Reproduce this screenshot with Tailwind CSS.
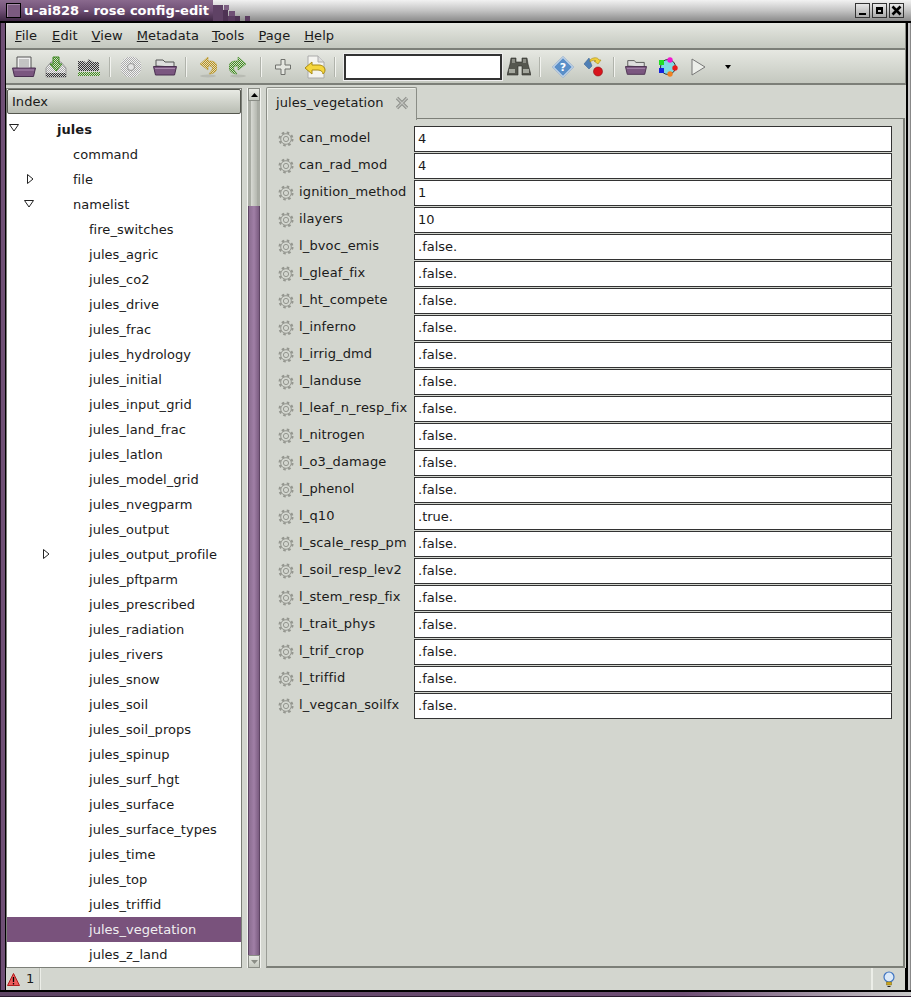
<!DOCTYPE html>
<html><head><meta charset="utf-8">
<script src="https://cdn.jsdelivr.net/npm/@tailwindcss/browser@4"></script>
</head>
<body class="m-0 overflow-hidden bg-white">
<svg width="0" height="0" class="absolute"><defs>
<pattern id="dk" width="2" height="2" patternUnits="userSpaceOnUse"><rect width="1" height="1" fill="#333"/><rect x="1" y="1" width="1" height="1" fill="#333"/><rect x="1" width="1" height="1" fill="#ccc"/><rect y="1" width="1" height="1" fill="#ccc"/></pattern>
<pattern id="gr" width="2" height="2" patternUnits="userSpaceOnUse"><rect width="1" height="1" fill="#3f8a22"/><rect x="1" y="1" width="1" height="1" fill="#3f8a22"/><rect x="1" width="1" height="1" fill="#d4dcc8"/><rect y="1" width="1" height="1" fill="#d4dcc8"/></pattern>
<pattern id="ye" width="2" height="2" patternUnits="userSpaceOnUse"><rect width="1" height="1" fill="#b8901a"/><rect x="1" y="1" width="1" height="1" fill="#b8901a"/><rect x="1" width="1" height="1" fill="#e0dcc0"/><rect y="1" width="1" height="1" fill="#e0dcc0"/></pattern>
<pattern id="lt" width="2" height="2" patternUnits="userSpaceOnUse"><rect width="1" height="1" fill="#aaa"/><rect x="1" y="1" width="1" height="1" fill="#aaa"/><rect x="1" width="1" height="1" fill="#f2f2f2"/><rect y="1" width="1" height="1" fill="#f2f2f2"/></pattern>
<symbol id="gear" viewBox="0 0 16 16"><g fill="none" stroke="#94968f"><circle cx="8" cy="8" r="6.500" stroke-width="2" stroke-dasharray="2.550 2.550"/><circle cx="8" cy="8" r="5.300" stroke-width="1"/><circle cx="8" cy="8" r="2.600" stroke-width="1"/></g></symbol>
<symbol id="tray" viewBox="0 0 24 10"><path d="M0.5 1h23l-2 8.500h-19z" fill="#7b5780" stroke="#4a3050"/><path d="M2 3h20" stroke="#a98aae"/></symbol>
</defs></svg>

<div class="w-[911px] h-[997px] flex flex-col relative font-['DejaVu_Sans',sans-serif] text-[13px] text-[#1a1a1a] bg-[#d3d6cf] overflow-hidden">
  <!-- Title bar -->
  <div class="h-[23px] shrink-0 flex items-center relative border-b-2 border-black bg-gradient-to-b from-[#f2f2f2] via-[#c4c4c4] to-[#8c8c8c]">
    <div class="absolute left-0 top-0 h-[21px] w-[213px] bg-gradient-to-b from-[#8a6a8e] via-[#6f4f75] to-[#3f2844]"></div>
    <div class="absolute left-[213px] top-[5px] w-[10px] h-[16px] bg-[#5f4265]"></div>
    <div class="absolute left-[223px] top-[10px] w-[5px] h-[11px] bg-[#4e3354]"></div>
    <div class="absolute left-[224px] top-[5px] w-[5px] h-[5px] bg-[#7d6082]"></div>
    <div class="absolute left-[229px] top-[11px] w-[6px] h-[5px] bg-[#6f4f75]"></div>
    <div class="absolute left-[228px] top-[16px] w-[7px] h-[5px] bg-[#5a3c60]"></div>
    <div class="absolute left-[235px] top-[16px] w-[5px] h-[5px] bg-[#4e3354]"></div>
    <div class="absolute left-[245px] top-[16px] w-[5px] h-[5px] bg-[#5a3c60]"></div>
    <div class="relative ml-[6px] w-[15px] h-[15px] border border-black bg-[#7b5a80] shadow-[inset_1px_1px_0_#a58aa8]"></div>
    <span class="relative ml-[3px] text-white font-bold text-[13px] whitespace-nowrap">u-ai828 - rose config-edit</span>
    <div class="ml-auto mr-[7px] relative flex gap-[2px]">
      <div class="w-[15px] h-[15px] border border-[#333] bg-gradient-to-b from-[#e8e8e8] to-[#aaa] flex items-end justify-center pb-[2px]"><div class="w-[7px] h-[2px] bg-black"></div></div>
      <div class="w-[15px] h-[15px] border border-[#333] bg-gradient-to-b from-[#e8e8e8] to-[#aaa] flex items-center justify-center"><div class="w-[7px] h-[7px] border-2 border-black border-t-[3px]"></div></div>
      <div class="w-[15px] h-[15px] border border-[#333] bg-gradient-to-b from-[#e8e8e8] to-[#aaa] flex items-center justify-center"><svg width="11" height="11" viewBox="0 0 11 11"><path d="M1.500 1.500l8 8M9.500 1.500l-8 8" stroke="#000" stroke-width="2.600"/></svg></div>
    </div>
  </div>

  <div class="flex-1 flex min-h-0">
    <!-- left frame -->
    <div class="w-[6px] shrink-0 bg-[#6f4f75] border-l border-[#2a1a2e] border-r border-r-black"></div>
    <div class="flex-1 min-w-0 flex flex-col">
      <!-- Menu -->
      <div class="h-[27px] shrink-0 flex items-center pl-[2px] pt-px border-b-2 border-[#7c7f78] border-r border-r-[#8a8d86] bg-gradient-to-b from-[#e6e8e2] to-[#c4c8bf] tracking-[0.08px]">
        <div class="pl-[7px] pr-[8px]"><span class="underline">F</span>ile</div>
        <div class="px-[7px]"><span class="underline">E</span>dit</div>
        <div class="px-[7px]"><span class="underline">V</span>iew</div>
        <div class="pl-[7px] pr-[6px]"><span class="underline">M</span>etadata</div>
        <div class="px-[7px]"><span class="underline">T</span>ools</div>
        <div class="px-[7px]"><span class="underline">P</span>age</div>
        <div class="px-[7px]"><span class="underline">H</span>elp</div>
      </div>
      <!-- Toolbar -->
      <div class="h-[35px] shrink-0 flex items-center border-b-2 border-[#7c7f78] border-r border-r-[#8a8d86] bg-gradient-to-b from-[#e6e8e2] to-[#c4c8bf]">
        <svg class="ml-[6px]" width="24" height="22" viewBox="0 0 24 22"><path d="M5 1h14v13H5z" fill="#eee" stroke="#555"/><path d="M7 4h10M7 6h10M7 8h10M7 10h10" stroke="#999"/><use href="#tray" y="11" width="24" height="10"/></svg>
        <svg class="ml-[8px]" width="24" height="24" viewBox="0 0 24 24"><path d="M2 13l5-6h10l5 6v9H2z" fill="url(#lt)" stroke="#999"/><path d="M2 18h20v4H2z" fill="url(#dk)"/><path d="M9 2h6v7h3l-6 7-6-7h3z" fill="url(#gr)" stroke="#3f8a22"/></svg>
        <svg class="ml-[9px]" width="24" height="22" viewBox="0 0 24 22"><path d="M1 5h6l2 2 3-4 4 3h6v9H1z" fill="url(#dk)"/><path d="M1 16h22v4H1z" fill="url(#gr)"/></svg>
        <div class="ml-[9px] w-px h-[20px] bg-[#f2f3ef] shadow-[-1px_0_0_#b0b3ab]"></div>
        <svg class="ml-[9px]" width="22" height="22" viewBox="0 0 22 22"><circle cx="11" cy="11" r="10.500" fill="url(#lt)"/><circle cx="11" cy="11" r="3.500" fill="#e4e4e4" stroke="#999"/></svg>
        <svg class="ml-[11px]" width="24" height="20" viewBox="0 0 24 20"><path d="M3 9V3h7l2 2h9v5z" fill="#ddd" stroke="#555"/><use href="#tray" y="8" width="24" height="11"/></svg>
        <div class="ml-[9px] w-px h-[20px] bg-[#f2f3ef] shadow-[-1px_0_0_#b0b3ab]"></div>
        <svg class="ml-[12px]" width="18" height="22" viewBox="0 0 18 22"><ellipse cx="9" cy="20" rx="8" ry="1.500" fill="#b8bbb3"/><path d="M9 1L1 8l8 6v-4h2c2 0 3 2 2 4l-3 4c5 0 8-3 8-7 0-4-3-6-7-6H9z" fill="url(#ye)" stroke="#b8901a" stroke-width=".5"/></svg>
        <svg class="ml-[12px]" width="18" height="22" viewBox="0 0 18 22"><ellipse cx="9" cy="20" rx="8" ry="1.500" fill="#b8bbb3"/><path d="M9 1l8 7-8 6v-4H7c-2 0-3 2-2 4l3 4c-5 0-8-3-8-7 0-4 3-6 7-6h2z" fill="url(#gr)" stroke="#3f8a22" stroke-width=".5"/></svg>
        <div class="ml-[14px] w-px h-[20px] bg-[#f2f3ef] shadow-[-1px_0_0_#b0b3ab]"></div>
        <svg class="ml-[13px]" width="16" height="16" viewBox="0 0 16 16"><path d="M6 .5h4v5.500h5.500v4H10v5.500H6V10H.5V6H6z" fill="#e4e6e0" stroke="#6f716c"/></svg>
        <svg class="ml-[13px]" width="22" height="24" viewBox="0 0 22 24"><path d="M4 1h10l6 6v16H4z" fill="#f4f4f0" stroke="#aaa"/><path d="M14 1v6h6" fill="#ddd" stroke="#aaa"/><path d="M1 13l7-6v3h7c3 0 6 2 6 5 0 2-1 3-2 4 0-2-2-4-5-4H8v4z" fill="#f5d63d" stroke="#a88a12"/></svg>
        <div class="ml-[9px] w-px h-[20px] bg-[#f2f3ef] shadow-[-1px_0_0_#b0b3ab]"></div>
        <div class="ml-[8px] w-[158px] h-[26px] bg-white border-2 border-[#333] shadow-[0_0_0_1px_#eee]"></div>
        <svg class="ml-[5px]" width="24" height="20" viewBox="0 0 24 20"><path d="M4 1h5v4h6V1h5l1 6 3 11h-9V9h-4v9H0L3 7z" fill="#55574f" stroke="#2e2e2a" stroke-width=".6"/><path d="M2 12h6v4H2zM16 12h6v4h-6z" fill="#a5a89f"/><path d="M5 2h3v4H5zM16 2h3v4h-3z" fill="#8b8d85"/></svg>
        <div class="ml-[9px] w-px h-[20px] bg-[#f2f3ef] shadow-[-1px_0_0_#b0b3ab]"></div>
        <svg class="ml-[11px]" width="22" height="22" viewBox="0 0 22 22"><path d="M11 1l10 10-10 10L1 11z" fill="#5b8fc8" stroke="#fff" stroke-width="1.400"/><path d="M11 .5L21.500 11 11 21.500.5 11z" fill="none" stroke="#3d6ea6" stroke-width=".7"/><text x="11" y="15" text-anchor="middle" font-size="11" font-weight="700" fill="#fff" font-family="DejaVu Sans">?</text></svg>
        <svg class="ml-[9px]" width="22" height="22" viewBox="0 0 22 22"><path d="M1 8l5-6 3 8-3 3z" fill="#4f7fb5" stroke="#2f5a8d" stroke-width=".5"/><path d="M7 4c3-3 8-3 9 0l2 0-3 4-4-3 2 0c-1-1-4-1-6 1z" fill="#f0cf3c" stroke="#a88a12" stroke-width=".6"/><circle cx="15" cy="15.500" r="4.500" fill="#d8141c" stroke="#8c0d12" stroke-width=".6"/></svg>
        <div class="ml-[9px] w-px h-[20px] bg-[#f2f3ef] shadow-[-1px_0_0_#b0b3ab]"></div>
        <svg class="ml-[10px]" width="22" height="20" viewBox="0 0 24 20"><path d="M3 9V3h7l2 2h9v5z" fill="#ddd" stroke="#555"/><use href="#tray" y="8" width="24" height="11"/></svg>
        <svg class="ml-[11px]" width="20" height="20" viewBox="0 0 20 20"><circle cx="10" cy="10" r="7.500" fill="#7fdbe4" stroke="#333"/><rect x="1" y="3" width="5" height="5" fill="#22dd22"/><rect x="1" y="11" width="5" height="5" fill="#1522e0"/><circle cx="12" cy="3" r="2.700" fill="#f018d0"/><circle cx="17" cy="11" r="2.700" fill="#e81a1a"/><circle cx="12" cy="17" r="2.700" fill="#f08020"/></svg>
        <svg class="ml-[13px]" width="16" height="18" viewBox="0 0 16 18"><path d="M1 1l13 8-13 8z" fill="#eceee9" stroke="#777"/></svg>
        <svg class="ml-[18px]" width="6" height="4" viewBox="0 0 6 4"><path d="M0 0h6L3 4z" fill="#000"/></svg>
      </div>
      <!-- Main -->
      <div class="flex-1 min-h-0 flex pt-[2px]">
        <!-- Left column -->
        <div class="w-[236px] shrink-0 flex flex-col border border-[#7c7f78] bg-white mt-px overflow-hidden h-[880px] tracking-[0.04px]">
          <div class="h-[25px] shrink-0 flex items-center pl-[4px] border border-[#55574f] rounded-[2px] bg-gradient-to-b from-[#e8eae4] to-[#b9bdb3]">Index</div>
          <div id="tree" class="pt-[3px] flex flex-col">
            <div class="h-[25px] flex items-center relative pl-[50px] font-bold"><svg class="absolute left-[2px] top-[7px]" width="10" height="8" viewBox="0 0 10 8"><path d="M.5.5h9L5 7z" fill="#fff" stroke="#222"/></svg>jules</div>
            <div class="h-[25px] flex items-center pl-[66px]">command</div>
            <div class="h-[25px] flex items-center relative pl-[66px]"><svg class="absolute left-[19px] top-[7px]" width="8" height="10" viewBox="0 0 8 10"><path d="M1.500.5v9L7 5z" fill="#fff" stroke="#222"/></svg>file</div>
            <div class="h-[25px] flex items-center relative pl-[66px]"><svg class="absolute left-[17px] top-[8px]" width="10" height="8" viewBox="0 0 10 8"><path d="M.5.5h9L5 7z" fill="#fff" stroke="#222"/></svg>namelist</div>
            <div class="h-[25px] flex items-center pl-[82px]">fire_switches</div>
            <div class="h-[25px] flex items-center pl-[82px]">jules_agric</div>
            <div class="h-[25px] flex items-center pl-[82px]">jules_co2</div>
            <div class="h-[25px] flex items-center pl-[82px]">jules_drive</div>
            <div class="h-[25px] flex items-center pl-[82px]">jules_frac</div>
            <div class="h-[25px] flex items-center pl-[82px]">jules_hydrology</div>
            <div class="h-[25px] flex items-center pl-[82px]">jules_initial</div>
            <div class="h-[25px] flex items-center pl-[82px]">jules_input_grid</div>
            <div class="h-[25px] flex items-center pl-[82px]">jules_land_frac</div>
            <div class="h-[25px] flex items-center pl-[82px]">jules_latlon</div>
            <div class="h-[25px] flex items-center pl-[82px]">jules_model_grid</div>
            <div class="h-[25px] flex items-center pl-[82px]">jules_nvegparm</div>
            <div class="h-[25px] flex items-center pl-[82px]">jules_output</div>
            <div class="h-[25px] flex items-center relative pl-[82px]"><svg class="absolute left-[35px] top-[7px]" width="8" height="10" viewBox="0 0 8 10"><path d="M1.500.5v9L7 5z" fill="#fff" stroke="#222"/></svg>jules_output_profile</div>
            <div class="h-[25px] flex items-center pl-[82px]">jules_pftparm</div>
            <div class="h-[25px] flex items-center pl-[82px]">jules_prescribed</div>
            <div class="h-[25px] flex items-center pl-[82px]">jules_radiation</div>
            <div class="h-[25px] flex items-center pl-[82px]">jules_rivers</div>
            <div class="h-[25px] flex items-center pl-[82px]">jules_snow</div>
            <div class="h-[25px] flex items-center pl-[82px]">jules_soil</div>
            <div class="h-[25px] flex items-center pl-[82px]">jules_soil_props</div>
            <div class="h-[25px] flex items-center pl-[82px]">jules_spinup</div>
            <div class="h-[25px] flex items-center pl-[82px]">jules_surf_hgt</div>
            <div class="h-[25px] flex items-center pl-[82px]">jules_surface</div>
            <div class="h-[25px] flex items-center pl-[82px]">jules_surface_types</div>
            <div class="h-[25px] flex items-center pl-[82px]">jules_time</div>
            <div class="h-[25px] flex items-center pl-[82px]">jules_top</div>
            <div class="h-[25px] flex items-center pl-[82px]">jules_triffid</div>
            <div class="h-[25px] flex items-center pl-[82px] bg-[#79527c] text-[#f0eef0]">jules_vegetation</div>
            <div class="h-[25px] flex items-center pl-[82px]">jules_z_land</div>
          </div>
        </div>
        <!-- Scrollbar -->
        <div class="w-[14px] shrink-0 ml-[5px] mt-px h-[880px] flex flex-col bg-[#bfc2ba] border-x border-[#f2f3ef]">
          <div class="h-[13px] shrink-0 flex items-center justify-center bg-gradient-to-b from-[#e8eae4] to-[#c4c8bf] border border-[#8a8d86]"><svg width="7" height="4" viewBox="0 0 7 4"><path d="M3.500 0L7 4H0z" fill="#000"/></svg></div>
          <div class="h-[105px] shrink-0 flex justify-center bg-[#a9aca4]"><div class="w-[6px] bg-gradient-to-r from-[#d8dad4] to-[#b5b8b0]"></div></div>
          <div class="flex-1 bg-gradient-to-r from-[#8a6d90] via-[#a07fa6] to-[#7a5c80] border-x border-[#5e4464]"></div>
          <div class="h-[13px] shrink-0 flex items-center justify-center bg-gradient-to-b from-[#e8eae4] to-[#c4c8bf] border border-[#8a8d86]"><svg width="7" height="4" viewBox="0 0 7 4"><path d="M3.500 4L7 0H0z" fill="#8a8d86"/></svg></div>
        </div>
        <!-- Notebook -->
        <div class="w-[639px] ml-[5px] flex flex-col h-[881px]">
          <div class="h-[32px] shrink-0 flex">
            <div class="w-[151px] flex items-center pl-[9px] pb-[2px] border-l border-t border-r border-[#8a8d86] rounded-t-[2px] bg-[#d3d6cf] shadow-[inset_1px_1px_0_#eef0ea] relative z-10 -mb-px tracking-[0.06px]">
              <span>jules_vegetation</span>
              <svg class="ml-[11px]" width="14" height="14" viewBox="0 0 14 14"><path d="M2 2l10 10M12 2L2 12" stroke="#8e908b" stroke-width="3.200"/><path d="M2 2l10 10M12 2L2 12" stroke="#c2c4bf" stroke-width="1.200"/></svg>
            </div>
            <div class="flex-1 border-b border-[#7c7f78]"></div>
          </div>
          <div class="flex-1 border-b-2 border-l border-r-2 border-[#7c7f78] border-l-[#9a9d96] pt-[7px] pl-[11px] flex flex-col gap-[1px]">
            <div class="h-[26px] flex items-center"><svg class="shrink-0" width="16" height="16"><use href="#gear"/></svg><span class="w-[120px] pl-[5px] shrink-0 -mt-[2px] tracking-[0.14px]">can_model</span><div class="w-[478px] h-[26px] bg-white border border-[#333] flex items-center pl-[3px]">4</div></div>
            <div class="h-[26px] flex items-center"><svg class="shrink-0" width="16" height="16"><use href="#gear"/></svg><span class="w-[120px] pl-[5px] shrink-0 -mt-[2px] tracking-[0.14px]">can_rad_mod</span><div class="w-[478px] h-[26px] bg-white border border-[#333] flex items-center pl-[3px]">4</div></div>
            <div class="h-[26px] flex items-center"><svg class="shrink-0" width="16" height="16"><use href="#gear"/></svg><span class="w-[120px] pl-[5px] shrink-0 -mt-[2px] tracking-[0.14px]">ignition_method</span><div class="w-[478px] h-[26px] bg-white border border-[#333] flex items-center pl-[3px]">1</div></div>
            <div class="h-[26px] flex items-center"><svg class="shrink-0" width="16" height="16"><use href="#gear"/></svg><span class="w-[120px] pl-[5px] shrink-0 -mt-[2px] tracking-[0.14px]">ilayers</span><div class="w-[478px] h-[26px] bg-white border border-[#333] flex items-center pl-[3px]">10</div></div>
            <div class="h-[26px] flex items-center"><svg class="shrink-0" width="16" height="16"><use href="#gear"/></svg><span class="w-[120px] pl-[5px] shrink-0 -mt-[2px] tracking-[0.14px]">l_bvoc_emis</span><div class="w-[478px] h-[26px] bg-white border border-[#333] flex items-center pl-[3px]">.false.</div></div>
            <div class="h-[26px] flex items-center"><svg class="shrink-0" width="16" height="16"><use href="#gear"/></svg><span class="w-[120px] pl-[5px] shrink-0 -mt-[2px] tracking-[0.14px]">l_gleaf_fix</span><div class="w-[478px] h-[26px] bg-white border border-[#333] flex items-center pl-[3px]">.false.</div></div>
            <div class="h-[26px] flex items-center"><svg class="shrink-0" width="16" height="16"><use href="#gear"/></svg><span class="w-[120px] pl-[5px] shrink-0 -mt-[2px] tracking-[0.14px]">l_ht_compete</span><div class="w-[478px] h-[26px] bg-white border border-[#333] flex items-center pl-[3px]">.false.</div></div>
            <div class="h-[26px] flex items-center"><svg class="shrink-0" width="16" height="16"><use href="#gear"/></svg><span class="w-[120px] pl-[5px] shrink-0 -mt-[2px] tracking-[0.14px]">l_inferno</span><div class="w-[478px] h-[26px] bg-white border border-[#333] flex items-center pl-[3px]">.false.</div></div>
            <div class="h-[26px] flex items-center"><svg class="shrink-0" width="16" height="16"><use href="#gear"/></svg><span class="w-[120px] pl-[5px] shrink-0 -mt-[2px] tracking-[0.14px]">l_irrig_dmd</span><div class="w-[478px] h-[26px] bg-white border border-[#333] flex items-center pl-[3px]">.false.</div></div>
            <div class="h-[26px] flex items-center"><svg class="shrink-0" width="16" height="16"><use href="#gear"/></svg><span class="w-[120px] pl-[5px] shrink-0 -mt-[2px] tracking-[0.14px]">l_landuse</span><div class="w-[478px] h-[26px] bg-white border border-[#333] flex items-center pl-[3px]">.false.</div></div>
            <div class="h-[26px] flex items-center"><svg class="shrink-0" width="16" height="16"><use href="#gear"/></svg><span class="w-[120px] pl-[5px] shrink-0 -mt-[2px] tracking-[0.14px]">l_leaf_n_resp_fix</span><div class="w-[478px] h-[26px] bg-white border border-[#333] flex items-center pl-[3px]">.false.</div></div>
            <div class="h-[26px] flex items-center"><svg class="shrink-0" width="16" height="16"><use href="#gear"/></svg><span class="w-[120px] pl-[5px] shrink-0 -mt-[2px] tracking-[0.14px]">l_nitrogen</span><div class="w-[478px] h-[26px] bg-white border border-[#333] flex items-center pl-[3px]">.false.</div></div>
            <div class="h-[26px] flex items-center"><svg class="shrink-0" width="16" height="16"><use href="#gear"/></svg><span class="w-[120px] pl-[5px] shrink-0 -mt-[2px] tracking-[0.14px]">l_o3_damage</span><div class="w-[478px] h-[26px] bg-white border border-[#333] flex items-center pl-[3px]">.false.</div></div>
            <div class="h-[26px] flex items-center"><svg class="shrink-0" width="16" height="16"><use href="#gear"/></svg><span class="w-[120px] pl-[5px] shrink-0 -mt-[2px] tracking-[0.14px]">l_phenol</span><div class="w-[478px] h-[26px] bg-white border border-[#333] flex items-center pl-[3px]">.false.</div></div>
            <div class="h-[26px] flex items-center"><svg class="shrink-0" width="16" height="16"><use href="#gear"/></svg><span class="w-[120px] pl-[5px] shrink-0 -mt-[2px] tracking-[0.14px]">l_q10</span><div class="w-[478px] h-[26px] bg-white border border-[#333] flex items-center pl-[3px]">.true.</div></div>
            <div class="h-[26px] flex items-center"><svg class="shrink-0" width="16" height="16"><use href="#gear"/></svg><span class="w-[120px] pl-[5px] shrink-0 -mt-[2px] tracking-[0.14px]">l_scale_resp_pm</span><div class="w-[478px] h-[26px] bg-white border border-[#333] flex items-center pl-[3px]">.false.</div></div>
            <div class="h-[26px] flex items-center"><svg class="shrink-0" width="16" height="16"><use href="#gear"/></svg><span class="w-[120px] pl-[5px] shrink-0 -mt-[2px] tracking-[0.14px]">l_soil_resp_lev2</span><div class="w-[478px] h-[26px] bg-white border border-[#333] flex items-center pl-[3px]">.false.</div></div>
            <div class="h-[26px] flex items-center"><svg class="shrink-0" width="16" height="16"><use href="#gear"/></svg><span class="w-[120px] pl-[5px] shrink-0 -mt-[2px] tracking-[0.14px]">l_stem_resp_fix</span><div class="w-[478px] h-[26px] bg-white border border-[#333] flex items-center pl-[3px]">.false.</div></div>
            <div class="h-[26px] flex items-center"><svg class="shrink-0" width="16" height="16"><use href="#gear"/></svg><span class="w-[120px] pl-[5px] shrink-0 -mt-[2px] tracking-[0.14px]">l_trait_phys</span><div class="w-[478px] h-[26px] bg-white border border-[#333] flex items-center pl-[3px]">.false.</div></div>
            <div class="h-[26px] flex items-center"><svg class="shrink-0" width="16" height="16"><use href="#gear"/></svg><span class="w-[120px] pl-[5px] shrink-0 -mt-[2px] tracking-[0.14px]">l_trif_crop</span><div class="w-[478px] h-[26px] bg-white border border-[#333] flex items-center pl-[3px]">.false.</div></div>
            <div class="h-[26px] flex items-center"><svg class="shrink-0" width="16" height="16"><use href="#gear"/></svg><span class="w-[120px] pl-[5px] shrink-0 -mt-[2px] tracking-[0.14px]">l_triffid</span><div class="w-[478px] h-[26px] bg-white border border-[#333] flex items-center pl-[3px]">.false.</div></div>
            <div class="h-[26px] flex items-center"><svg class="shrink-0" width="16" height="16"><use href="#gear"/></svg><span class="w-[120px] pl-[5px] shrink-0 -mt-[2px] tracking-[0.14px]">l_vegcan_soilfx</span><div class="w-[478px] h-[26px] bg-white border border-[#333] flex items-center pl-[3px]">.false.</div></div>
          </div>
        </div>
      </div>
      <!-- Status -->
      <div class="h-[22px] shrink-0 flex items-center border-r border-black">
        <svg class="ml-px" width="13" height="13" viewBox="0 0 13 13"><path d="M6.500.5l6 12H.5z" fill="#ec5a5a" stroke="#b01c1c"/><path d="M6.500 4v5M6.500 10v1.500" stroke="#000" stroke-width="1.300"/></svg>
        <span class="ml-[6px]">1</span>
        <div class="ml-[6px] w-px h-[22px] bg-[#eceee8] shadow-[-1px_0_0_#b9bcb4]"></div>
        <div class="flex-1"></div>
        <div class="w-[2px] h-[22px] bg-[#eceee8]"></div>
        <svg class="ml-[10px] mr-[10px]" width="12" height="16" viewBox="0 0 12 16"><circle cx="6" cy="6" r="5" fill="#dbe9f8" stroke="#3f74c2" stroke-width="1.200"/><path d="M3.500 11h5v3h-5z" fill="#c9a51e" stroke="#7a6410" stroke-width=".5"/><path d="M4.500 15.500h3" stroke="#222"/></svg>
      </div>
    </div>
    <!-- right frame -->
    <div class="w-[5px] shrink-0 bg-[#c9c9c9] border-l-2 border-l-black border-r border-r-[#888]"></div>
  </div>
  <!-- bottom frame -->
  <div class="h-[7px] shrink-0 bg-gradient-to-r from-[#5e4464] via-[#6f4f75] via-[75%] to-[#c9c9c9] border-t-2 border-black border-b border-b-[#2a1a2e]"></div>
</div>
</body></html>
